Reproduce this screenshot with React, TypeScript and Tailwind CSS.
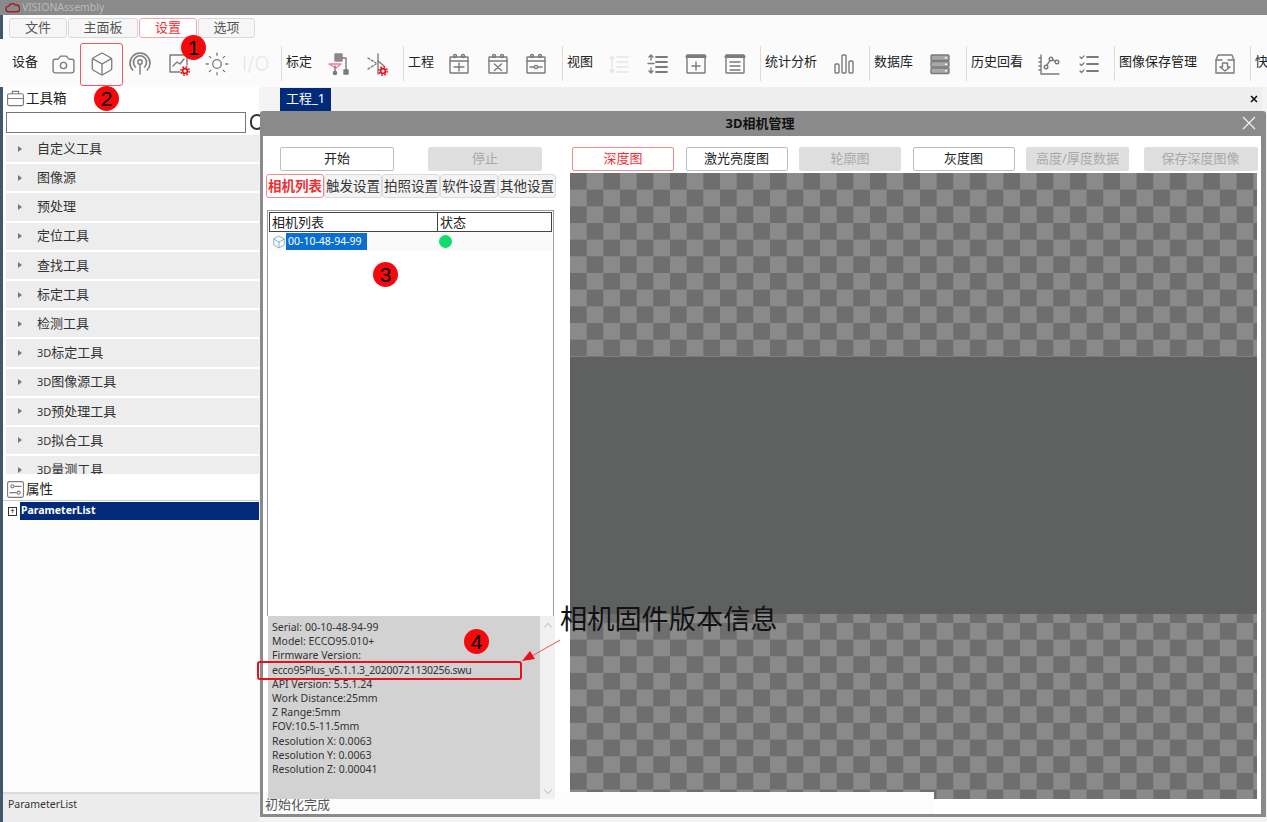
import type { ReactNode } from "react";
import { Box, Camera, Sun } from "lucide-react";

const FONT = "font-['Noto_Sans','Noto_Sans_CJK_SC',sans-serif]";
const TOOLS = ["自定义工具", "图像源", "预处理", "定位工具", "查找工具", "标定工具", "检测工具", "3D标定工具", "3D图像源工具", "3D预处理工具", "3D拟合工具", "3D量测工具"];
const TABS = ["触发设置", "拍照设置", "软件设置", "其他设置"];
const INFO_TOP = ["Serial: 00-10-48-94-99", "Model: ECCO95.010+", "Firmware Version:"];
const INFO_BOTTOM = ["API Version: 5.5.1.24", "Work Distance:25mm", "Z Range:5mm", "FOV:10.5-11.5mm", "Resolution X: 0.0063", "Resolution Y: 0.0063", "Resolution Z: 0.00041"];

function Svg({ children, size = 24, color = "#7b7b7b" }: { children: ReactNode; size?: number; color?: string }) {
  return (
    <svg width={size} height={size} viewBox="0 0 24 24" fill="none" stroke={color} strokeWidth="1.4" strokeLinecap="round" strokeLinejoin="round">
      {children}
    </svg>
  );
}

function Gear({ x, y }: { x: number; y: number }) {
  return (
    <g strokeLinecap="butt">
      <circle cx={x} cy={y} r="2.4" fill="#fbfbfb" stroke="#e0151b" strokeWidth="1.8" />
      <circle cx={x} cy={y} r="4.2" fill="none" stroke="#e0151b" strokeWidth="1.5" strokeDasharray="1.7 1.6" />
    </g>
  );
}

function CalendarIcon({ children, color }: { children: ReactNode; color?: string }) {
  return (
    <Svg color={color}>
      <rect x="3" y="5" width="18" height="16" rx="0.5" />
      <path d="M3 9h18" />
      <circle cx="8" cy="4" r="1.5" />
      <circle cx="16" cy="4" r="1.5" />
      {children}
    </Svg>
  );
}

function WindowIcon({ children }: { children: ReactNode }) {
  return (
    <Svg>
      <rect x="3" y="3" width="18" height="18" rx="0.5" />
      <path d="M3 4.5h18" strokeWidth="3" />
      {children}
    </Svg>
  );
}

function ToolIcon({ children }: { children: ReactNode }) {
  return <div className="w-[38.5px] shrink-0 pt-[2px] flex items-center justify-center">{children}</div>;
}

function Section({ label, width, labelWidth, first, children }: { label: string; width: string; labelWidth: string; first?: boolean; children?: ReactNode }) {
  return (
    <div className={`${width} h-[35px] shrink-0 flex items-center ${first ? "pl-[12px]" : "border-l border-[#dcdcdc] pl-[4px]"}`}>
      <span className={`${labelWidth} shrink-0 mb-[2px] text-[13px] text-[#222] whitespace-nowrap`}>{label}</span>
      {children}
    </div>
  );
}

function Toolbar() {
  return (
    <div className="h-[48px] bg-[#fbfbfb] flex items-center overflow-hidden">
      <Section first label="设备" width="w-[281px]" labelWidth="w-[32px]">
        <ToolIcon><Camera size={25} strokeWidth={1.3} color="#7b7b7b" /></ToolIcon>
        <ToolIcon>
          <div className="w-[43px] h-[43px] shrink-0 border border-[#f0595f] rounded-[3px] flex items-center justify-center">
            <Box size={26} strokeWidth={1.2} color="#7b7b7b" />
          </div>
        </ToolIcon>
        <ToolIcon>
          <Svg>
            <circle cx="12" cy="10" r="2.2" />
            <path d="M12 12.5V22" />
            <path d="M7.5 15a6.5 6.5 0 1 1 9 0" strokeWidth="1.6" />
            <path d="M4.8 18a10 10 0 1 1 14.4 0" strokeWidth="1.6" />
          </Svg>
        </ToolIcon>
        <ToolIcon>
          <Svg>
            <path d="M13 20H3V3h17v10" />
            <path d="M6 14l4-4 3 2 4-5" />
            <Gear x={18} y={19} />
          </Svg>
        </ToolIcon>
        <ToolIcon><Sun size={26} strokeWidth={1.2} color="#7b7b7b" /></ToolIcon>
        <ToolIcon><span className="text-[20px] font-['Inter',sans-serif] font-light text-[#e4e8f0]">I/O</span></ToolIcon>
      </Section>
      <Section label="标定" width="w-[122px]" labelWidth="w-[33px]">
        <ToolIcon>
          <Svg>
            <rect x="9" y="2" width="7" height="7" fill="#8a8a8a" stroke="#8a8a8a" />
            <path d="M16 6h4v14" />
            <rect x="18" y="18" width="4" height="4" fill="#7b7b7b" />
            <path d="M3 12h12l-5 4z" stroke="#f0808a" />
            <path d="M9 14v7" stroke="#7b7b7b" />
            <circle cx="9" cy="21" r="1.6" fill="#7b7b7b" />
          </Svg>
        </ToolIcon>
        <ToolIcon>
          <Svg>
            <path d="M13 2v20" />
            <path d="M3 6l8 5M3 17l8-5" strokeDasharray="2 2" />
            <path d="M13 9l6 5" />
            <Gear x={18} y={19} />
          </Svg>
        </ToolIcon>
      </Section>
      <Section label="工程" width="w-[159px]" labelWidth="w-[32px]">
        <ToolIcon><CalendarIcon><path d="M12 11v8M7 15h10" /></CalendarIcon></ToolIcon>
        <ToolIcon><CalendarIcon><path d="M8.5 12l7 6.5M15.5 12l-7 6.5" /></CalendarIcon></ToolIcon>
        <ToolIcon><CalendarIcon><path d="M6 15h12" /><circle cx="12" cy="15" r="1.6" fill="#fbfbfb" /></CalendarIcon></ToolIcon>
      </Section>
      <Section label="视图" width="w-[198px]" labelWidth="w-[33px]">
        <ToolIcon>
          <Svg color="#e3e6ee"><path d="M10 5h11M10 10h11M10 15h11M10 20h11M5 4v17M3 7l2-3 2 3M3 18l2 3 2-3" /></Svg>
        </ToolIcon>
        <ToolIcon>
          <Svg><path d="M10 5h11M10 10h11M10 15h11M10 20h11" strokeWidth="1.8" /><path d="M5 8V3M3 5l2-2 2 2M5 16v5M3 19l2 2 2-2M2 11.500h6" /></Svg>
        </ToolIcon>
        <ToolIcon><WindowIcon><path d="M12 10v8M8 14h8" /></WindowIcon></ToolIcon>
        <ToolIcon><WindowIcon><path d="M7 10h10M7 14h10M7 18h10" /></WindowIcon></ToolIcon>
      </Section>
      <Section label="统计分析" width="w-[109px]" labelWidth="w-[60px]">
        <ToolIcon>
          <Svg><rect x="3" y="12" width="4" height="9" rx="1" /><rect x="10" y="3" width="4" height="18" rx="1" /><rect x="17" y="9" width="4" height="12" rx="1" /></Svg>
        </ToolIcon>
      </Section>
      <Section label="数据库" width="w-[97px]" labelWidth="w-[47px]">
        <ToolIcon>
          <Svg>
            <rect x="3" y="3" width="18" height="5.500" rx="1" fill="#a8a8a8" />
            <rect x="3" y="9.500" width="18" height="5.500" rx="1" fill="#a8a8a8" />
            <rect x="3" y="16" width="18" height="5.500" rx="1" fill="#a8a8a8" />
            <path d="M17.500 5.700h1M17.500 12.200h1M17.500 18.700h1" stroke="#ffffff" />
          </Svg>
        </ToolIcon>
      </Section>
      <Section label="历史回看" width="w-[148px]" labelWidth="w-[60px]">
        <ToolIcon>
          <Svg>
            <path d="M3 3v19h18" />
            <path d="M1 6h2M1 10h2M1 14h2M1 18h2" />
            <circle cx="8" cy="15" r="1.800" />
            <circle cx="13" cy="7" r="1.800" />
            <circle cx="19" cy="10" r="1.800" />
            <path d="M9 13l3-4.500M15 8l2 1" />
          </Svg>
        </ToolIcon>
        <ToolIcon>
          <Svg><path d="M10 5h11M10 12h11M10 19h11" strokeWidth="1.8" /><path d="M3 5l1.500 1.500L7 4M3 12l1.500 1.500L7 11M3 19l1.500 1.500L7 18" strokeWidth="1.2" /></Svg>
        </ToolIcon>
      </Section>
      <Section label="图像保存管理" width="w-[136px]" labelWidth="w-[87px]">
        <ToolIcon>
          <Svg>
            <path d="M3 8l2-5h14l2 5v13H3z" />
            <path d="M3 8h6M15 8h6" />
            <path d="M9.500 11h5v4H17l-5 4-5-4h2.500z" />
          </Svg>
        </ToolIcon>
      </Section>
      <Section label="快" width="w-[17px]" labelWidth="w-[12px]" />
    </div>
  );
}

function ToolName({ name }: { name: string }) {
  if (!name.startsWith("3D")) return <>{name}</>;
  return (
    <>
      <span className="text-[11px]">3D</span>
      {name.slice(2)}
    </>
  );
}

function LeftPanel() {
  return (
    <div className="w-[256px] shrink-0 flex flex-col bg-white">
      <div className="h-[22px] flex items-center pl-[3px] gap-[1px]">
        <Svg size={19}>
          <rect x="2" y="6" width="20" height="15" rx="2" />
          <path d="M8 6V3h8v3M2 12h20" />
        </Svg>
        <span className="text-[13.500px] text-[#222]">工具箱</span>
      </div>
      <div className="h-[24px] flex items-center pt-[2px] pl-[3px]">
        <div className="w-[240px] h-[21px] border border-[#777] bg-white" />
      </div>
      <div className="h-[341px] overflow-hidden pl-[3px] pt-[2px] flex flex-col gap-[2px]">
        {TOOLS.map((t) => (
          <div key={t} className="h-[27.200px] shrink-0 bg-[#ededed] flex items-center">
            <span className="ml-[12px] w-0 h-0 border-y-[3.5px] border-y-transparent border-l-[4px] border-l-[#777]" />
            <span className="ml-[15px] text-[13px] text-[#333] whitespace-nowrap"><ToolName name={t} /></span>
          </div>
        ))}
      </div>
      <div className="h-[4px]" />
      <div className="h-[23px] flex items-center pl-[3px] gap-[1px] border-b border-[#ccc]">
        <Svg size={19}>
          <rect x="2" y="2" width="20" height="20" rx="2" />
          <circle cx="8" cy="8" r="2" />
          <path d="M11 8h8M5 16h8" />
          <circle cx="16" cy="16" r="2" />
        </Svg>
        <span className="text-[13.500px] text-[#222]">属性</span>
      </div>
      <div className="h-[18px] mt-[1px] flex items-center">
        <span className="ml-[5px] w-[9px] h-[9px] border border-[#333] flex items-center justify-center text-[8px] leading-none text-[#111]">+</span>
        <div className="ml-[3px] flex-1 h-full bg-[#012a78] flex items-center pl-[1px]">
          <span className="text-[10.500px] font-bold text-white">ParameterList</span>
        </div>
      </div>
      <div className="flex-1 bg-[#fcfcfc]" />
      <div className="h-[30px] bg-[#ececec] border-t-2 border-[#dcdcdc] pl-[5px] text-[10.500px] leading-[20px] text-[#333]">ParameterList</div>
    </div>
  );
}

function DialogButton({ label, width, state = "normal" }: { label: string; width: string; state?: "normal" | "active" | "disabled" }) {
  const look = {
    normal: "bg-white border-[#bdbdbd] text-[#222]",
    active: "bg-white border-[#f08a8f] text-[#ee2f35]",
    disabled: "bg-[#dedede] border-[#dedede] text-[#a9a9a9]",
  }[state];
  return <div className={`${width} h-[24px] shrink-0 border rounded-[2px] flex items-center justify-center text-[13px] ${look}`}>{label}</div>;
}

function CameraDialog() {
  return (
    <div className="absolute left-[260px] top-[111px] w-[1006px] h-[706px] border-b-[3px] border-l-[3px] border-r-[5px] border-[#8a8a8a] bg-white rounded-t-[3px] flex flex-col">
      <div className="h-[25px] shrink-0 bg-[#8a8a8a] relative flex items-center justify-center pr-[4px]">
        <span className="text-[13px] font-bold text-[#111]">3D相机管理</span>
        <svg className="absolute right-[5px] top-[5px]" width="14" height="14" viewBox="0 0 14 14" stroke="#f2f2f2" strokeWidth="1.2"><path d="M1 1l12 12M13 1L1 13" /></svg>
      </div>
      <div className="flex-1 min-h-0 flex">
        <div className="w-[307px] shrink-0 flex flex-col">
          <div className="h-[35px] shrink-0 flex items-end pl-[17px] gap-[34px]">
            <DialogButton label="开始" width="w-[114px]" />
            <DialogButton label="停止" width="w-[114px]" state="disabled" />
          </div>
          <div className="h-[25px] mt-[3px] shrink-0 flex pl-[3px]">
            <div className="w-[58px] h-[24px] border border-[#f08a8f] rounded-[3px] bg-white flex items-center justify-center text-[13.500px] font-bold text-[#ee2f35] whitespace-nowrap overflow-hidden">相机列表</div>
            {TABS.map((t) => (
              <div key={t} className="w-[58px] h-[24px] border border-[#dcdcdc] rounded-[3px] bg-[#f3f3f3] flex items-center justify-center text-[13.500px] text-[#333] whitespace-nowrap overflow-hidden">{t}</div>
            ))}
          </div>
          <div className="ml-[4px] mt-[11px] w-[287px] h-[406px] shrink-0 border border-[#9a9aa5] border-b-0 p-[1px]">
            <div className="h-[20px] flex border border-[#444] text-[13px] text-[#222]">
              <div className="w-[168px] border-r border-[#444] pl-[2px] leading-[18px]">相机列表</div>
              <div className="flex-1 pl-[2px] leading-[18px]">状态</div>
            </div>
            <div className="h-[19px] flex items-center bg-[#fafafa]">
              <span className="ml-[3px] w-[14px]">
                <Svg size={14} color="#6fa8c8"><path d="M12 2l9 5v10l-9 5-9-5V7z" /><path d="M3 7l9 5 9-5M12 12v10" /></Svg>
              </span>
              <span className="w-[81px] h-[17px] bg-[#0a6fd1] text-white text-[10.500px] leading-[17px] pl-[2px]">00-10-48-94-99</span>
              <span className="ml-[72px] w-[13px] h-[13px] rounded-full bg-[#0fdc6c]" />
            </div>
          </div>
          <div className="relative z-10 ml-[5px] w-[287px] h-[183px] shrink-0 flex">
            <div className="w-[272px] bg-[#d2d2d2] pl-[4px] pt-[4px] text-[10.500px] leading-[14.200px] text-[#333]">
              {INFO_TOP.map((line) => (
                <div key={line} className="whitespace-nowrap">{line}</div>
              ))}
              <div className="whitespace-nowrap tracking-[-0.24px]">ecco95Plus_v5.1.1.3_20200721130256.swu</div>
              {INFO_BOTTOM.map((line) => (
                <div key={line} className="whitespace-nowrap">{line}</div>
              ))}
            </div>
            <div className="flex-1 bg-[#f1f1f1] flex flex-col items-center justify-between py-[6px]">
              <span className="w-[6px] h-[6px] mt-[2px] border-l border-t border-[#c8c8c8] rotate-45" />
              <span className="w-[6px] h-[6px] border-r border-b border-[#c8c8c8] rotate-45" />
            </div>
          </div>
        </div>
        <div className="flex-1 min-w-0 flex flex-col">
          <div className="h-[35px] shrink-0 flex items-end pl-[2px] gap-[11.500px]">
            <DialogButton label="深度图" width="w-[102px]" state="active" />
            <DialogButton label="激光亮度图" width="w-[102px]" />
            <DialogButton label="轮廓图" width="w-[102px]" state="disabled" />
            <DialogButton label="灰度图" width="w-[102px]" />
            <DialogButton label="高度/厚度数据" width="w-[103px]" state="disabled" />
            <DialogButton label="保存深度图像" width="w-[114px] ml-[3px]" state="disabled" />
          </div>
          <div className="mt-[2px] w-[687px] h-[626px] shrink-0 flex flex-col bg-[conic-gradient(#8a8a8a_25%,#6e6e6e_0_50%,#8a8a8a_0_75%,#6e6e6e_0)] bg-[length:33.330px_33.330px]">
            <div className="h-[184px] shrink-0" />
            <div className="h-[257px] shrink-0 bg-[#5f6060]" />
          </div>
        </div>
      </div>
      <div className="h-[15px] shrink-0" />
      <div className="absolute left-0 top-[681px] w-[671px] h-[22px] bg-[#fcfcfc] pl-[2px] pt-[4px] text-[13px] leading-[16px] text-[#555]">初始化完成</div>
    </div>
  );
}

function Marker({ n, className }: { n: number; className: string }) {
  return (
    <div className={`absolute w-[25px] h-[25px] rounded-full bg-[#f5090c] flex items-center justify-center text-[21px] leading-none text-black font-['Liberation_Sans',sans-serif] z-20 ${className}`}>{n}</div>
  );
}

export default function App() {
  return (
    <div className={`relative w-[1267px] h-[822px] overflow-hidden bg-[#f0f0f0] ${FONT}`}>
      <div className="h-[15px] bg-[#8a8a8a] flex items-center pl-[5px] gap-[2px]">
        <svg width="15" height="10" viewBox="0 0 16 10" fill="none" stroke="#a01f2a" strokeWidth="1.5"><path d="M4 9a3 3 0 0 1 0-6 4 4 0 0 1 7-1 3 3 0 0 1 2 7z" /></svg>
        <span className="text-[10.500px] text-[#b9b9b9]">VISIONAssembly</span>
      </div>
      <div className="flex h-[807px]">
        <div className="w-[3px] shrink-0 bg-[#44566a]" />
        <div className="flex-1 min-w-0 flex flex-col">
          <div className="h-[24px] bg-[#fbfbfb] pt-[3px] pl-[6px]">
            <div className="flex gap-[1px] h-[20px] text-[13px]">
              <div className="w-[58px] border border-[#d8d8d8] rounded-[3px] bg-[#f6f6f6] flex items-center justify-center text-[#555]">文件</div>
              <div className="w-[70px] border border-[#d8d8d8] rounded-[3px] bg-[#f6f6f6] flex items-center justify-center text-[#555]">主面板</div>
              <div className="w-[58px] border border-[#f2a5a8] rounded-[3px] bg-white flex items-center justify-center text-[#ee2f35]">设置</div>
              <div className="w-[57px] border border-[#d8d8d8] rounded-[3px] bg-[#f6f6f6] flex items-center justify-center text-[#555]">选项</div>
            </div>
          </div>
          <div className="-ml-[3px]"><Toolbar /></div>
          <div className="flex-1 min-h-0 flex">
            <LeftPanel />
            <div className="flex-1 min-w-0 flex flex-col bg-[#f4f4f4]">
              <div className="h-[24px] ml-[21px] mr-[5px] bg-[#eeeeee] flex items-center justify-between">
                <div className="w-[51px] h-[23px] bg-[#012a78] text-white text-[13px] flex items-center justify-center">工程_1</div>
                <svg className="mr-[4px]" width="8" height="8" viewBox="0 0 8 8" stroke="#111" strokeWidth="1.6"><path d="M1 1l6 6M7 1L1 7" /></svg>
              </div>
            </div>
          </div>
        </div>
      </div>

      <div className="absolute left-[250px] top-[114px] w-[14px] h-[16px] rounded-full border-2 border-[#333] bg-white" />
      <CameraDialog />

      <Marker n={1} className="left-[181px] top-[35px]" />
      <Marker n={2} className="left-[94px] top-[86px]" />
      <Marker n={3} className="left-[373px] top-[262px]" />
      <Marker n={4} className="left-[464px] top-[629px]" />
      <div className="absolute left-[257px] top-[661px] w-[265px] h-[19px] border-2 border-[#e8101c] rounded-[3px] z-20" />
      <svg className="absolute left-[520px] top-[636px] z-20" width="44" height="28" viewBox="0 0 44 28">
        <path d="M40 4L12 20" stroke="#f0505a" strokeWidth="1" />
        <path d="M2 25l8-10 5 8z" fill="#e8101c" />
      </svg>
      <div className="absolute left-[560px] top-[600px] text-[27.200px] leading-[38px] text-[#111] z-20 whitespace-nowrap">相机固件版本信息</div>
    </div>
  );
}
